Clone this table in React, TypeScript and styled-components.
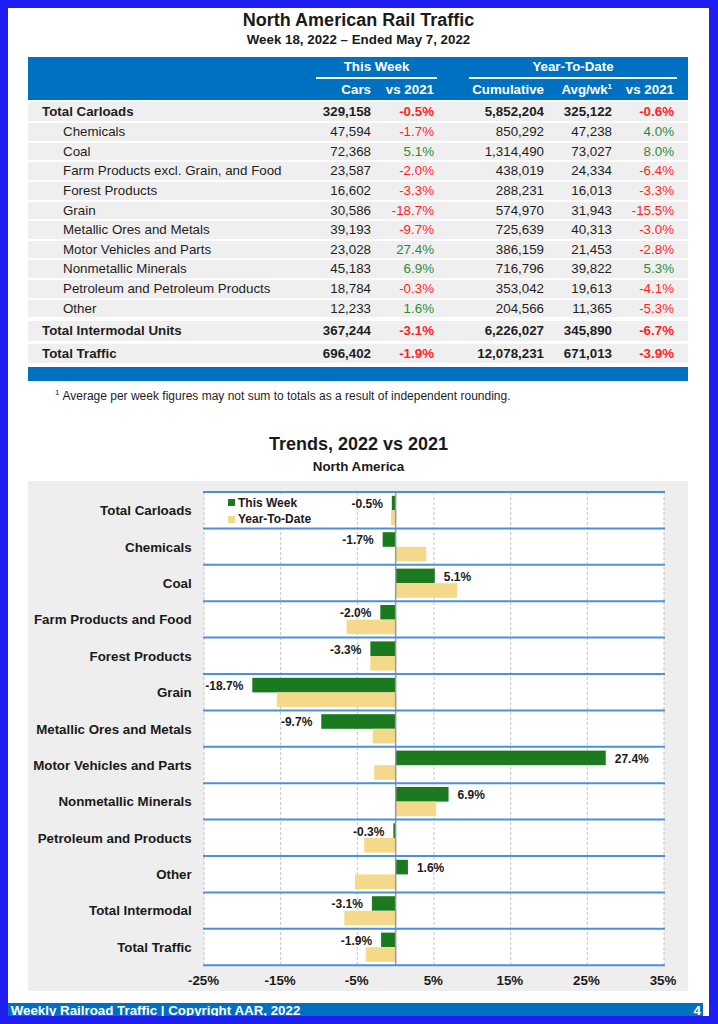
import React from "react";
import styled, { createGlobalStyle } from "styled-components";

const GlobalStyle = createGlobalStyle`
  html, body { margin: 0; padding: 0; background: #1e1ef0; }
  body { font-family: "Liberation Sans", Arial, sans-serif; color: #1a1a1a; }
  #root { padding: 8px 9px 8px 8px; }
`;

const Page = styled.div`
  width: 701px;
  height: 1008px;
  background: #fff;
  display: flex;
  flex-direction: column;
  overflow: hidden;
`;

const Title = styled.h1`
  margin: 2px 0 0;
  font-size: 18px;
  line-height: 20px;
  font-weight: 700;
  text-align: center;
`;

const Subtitle = styled.div`
  margin-top: ${(p: { $mt: number }) => p.$mt}px;
  font-size: 13.33px;
  line-height: 16px;
  font-weight: 700;
  text-align: center;
`;

const COLS = "288px 58px 63px 32px 78px 68px 62px 11px";

const Table = styled.div`
  margin: 9px 0 0 20px;
  width: 660px;
  display: flex;
  flex-direction: column;
  gap: 2px;
`;

const Header = styled.div`
  display: grid;
  grid-template-columns: ${COLS};
  background: #0070c0;
  color: #fff;
  font-size: 13.33px;
  font-weight: 700;
`;

const HeaderGroup = styled.div<{ $span: string }>`
  grid-column: ${(p) => p.$span};
  line-height: 20px;
  text-align: center;
  border-bottom: 2px solid #fff;
`;

const HeaderCell = styled.div`
  line-height: 21px;
  text-align: right;
  padding-right: 3px;
  white-space: nowrap;
  sup {
    font-size: 8px;
    line-height: 0;
    vertical-align: 5px;
  }
`;

const Row = styled.div<{ $bold?: boolean; $mt?: number }>`
  display: grid;
  grid-template-columns: ${COLS};
  background: #efefef;
  height: ${(p) => (p.$bold ? "19.3px" : "17.6px")};
  line-height: ${(p) => (p.$bold ? "19.3px" : "17.6px")};
  margin-top: ${(p) => p.$mt ?? 0}px;
  font-size: 13.33px;
  font-weight: ${(p) => (p.$bold ? 700 : 400)};
  color: #1e1e1e;
`;

const LabelCell = styled.div<{ $indent?: boolean }>`
  padding-left: ${(p) => (p.$indent ? 35 : 14)}px;
  white-space: nowrap;
`;

const NumCell = styled.div<{ $tone?: "neg" | "pos" }>`
  text-align: right;
  padding-right: 3px;
  white-space: nowrap;
  color: ${(p) => (p.$tone === "neg" ? "#ff1f1f" : p.$tone === "pos" ? "#2e8b34" : "inherit")};
`;

const BottomBar = styled.div`
  height: 13.7px;
  margin-top: 1.5px;
  background: #0070c0;
`;

const Footnote = styled.p`
  margin: 8.3px 0 0 47px;
  font-size: 12px;
  line-height: 14px;
  color: #1e1e1e;
  sup {
    font-size: 8px;
    line-height: 0;
    vertical-align: 5px;
    margin-right: 3px;
  }
`;

const ChartTitle = styled.h2`
  margin: 30.7px 0 0;
  font-size: 18px;
  line-height: 20px;
  font-weight: 700;
  text-align: center;
`;

const Panel = styled.div`
  margin: 6.4px 0 0 20px;
  width: 660px;
  height: 510px;
  box-sizing: border-box;
  padding-top: 10px;
  background: #eeeeee;
`;

const ChartBody = styled.div`
  display: flex;
`;

const LabelColumn = styled.div`
  width: 174.6px;
  padding-top: 1px;
  display: grid;
  grid-template-rows: repeat(13, 36.4px);
`;

const CatLabel = styled.div`
  display: flex;
  align-items: center;
  justify-content: flex-end;
  padding-right: 10.9px;
  font-size: 13.33px;
  font-weight: 700;
  white-space: nowrap;
  color: #1a1a1a;
`;

const PlotWrap = styled.div`
  position: relative;
  width: 462px;
  height: 476px;
`;

const Legend = styled.div`
  position: absolute;
  left: 21.4px;
  top: 3px;
  width: 90px;
  padding: 0.25px 0 0 4px;
  height: 33px;
  box-sizing: border-box;
  background: #fff;
  display: flex;
  flex-direction: column;
`;

const LegendItem = styled.div`
  height: 17.5px;
  display: flex;
  align-items: center;
  gap: 3px;
  font-size: 12px;
  font-weight: 700;
  color: #1a1a1a;
  white-space: nowrap;
`;

const Swatch = styled.span<{ $color: string }>`
  width: 7px;
  height: 7px;
  background: ${(p) => p.$color};
  flex: none;
`;

const AxisRow = styled.div`
  margin: 6px 0 0 150.6px;
  display: flex;
  gap: 26.667px;
`;

const AxisLabel = styled.div`
  width: 50px;
  text-align: center;
  font-size: 13.33px;
  line-height: 16px;
  font-weight: 700;
  color: #1a1a1a;
`;

const Footer = styled.div`
  margin-top: auto;
  width: 695px;
  height: 13px;
  box-sizing: border-box;
  padding: 1.1px 2px 0 2.7px;
  background: #0070c0;
  color: #fff;
  font-size: 13.33px;
  line-height: 13px;
  font-weight: 700;
  display: flex;
  justify-content: space-between;
  overflow: hidden;
  white-space: nowrap;
`;

type TRow = {
  label: string;
  bold?: boolean;
  mt?: number;
  v: [string, string, string, string, string];
};

const rows: TRow[] = [
  { label: "Total Carloads", bold: true, v: ["329,158", "-0.5%", "5,852,204", "325,122", "-0.6%"] },
  { label: "Chemicals", v: ["47,594", "-1.7%", "850,292", "47,238", "4.0%"] },
  { label: "Coal", v: ["72,368", "5.1%", "1,314,490", "73,027", "8.0%"] },
  { label: "Farm Products excl. Grain, and Food", v: ["23,587", "-2.0%", "438,019", "24,334", "-6.4%"] },
  { label: "Forest Products", v: ["16,602", "-3.3%", "288,231", "16,013", "-3.3%"] },
  { label: "Grain", v: ["30,586", "-18.7%", "574,970", "31,943", "-15.5%"] },
  { label: "Metallic Ores and Metals", v: ["39,193", "-9.7%", "725,639", "40,313", "-3.0%"] },
  { label: "Motor Vehicles and Parts", v: ["23,028", "27.4%", "386,159", "21,453", "-2.8%"] },
  { label: "Nonmetallic Minerals", v: ["45,183", "6.9%", "716,796", "39,822", "5.3%"] },
  { label: "Petroleum and Petroleum Products", v: ["18,784", "-0.3%", "353,042", "19,613", "-4.1%"] },
  { label: "Other", v: ["12,233", "1.6%", "204,566", "11,365", "-5.3%"] },
  { label: "Total Intermodal Units", bold: true, mt: 2, v: ["367,244", "-3.1%", "6,226,027", "345,890", "-6.7%"] },
  { label: "Total Traffic", bold: true, mt: 1.5, v: ["696,402", "-1.9%", "12,078,231", "671,013", "-3.9%"] },
];

const tone = (s: string): "neg" | "pos" => (s.startsWith("-") ? "neg" : "pos");

const chart: { label: string; week: number; ytd: number }[] = [
  { label: "Total Carloads", week: -0.5, ytd: -0.6 },
  { label: "Chemicals", week: -1.7, ytd: 4.0 },
  { label: "Coal", week: 5.1, ytd: 8.0 },
  { label: "Farm Products and Food", week: -2.0, ytd: -6.4 },
  { label: "Forest Products", week: -3.3, ytd: -3.3 },
  { label: "Grain", week: -18.7, ytd: -15.5 },
  { label: "Metallic Ores and Metals", week: -9.7, ytd: -3.0 },
  { label: "Motor Vehicles and Parts", week: 27.4, ytd: -2.8 },
  { label: "Nonmetallic Minerals", week: 6.9, ytd: 5.3 },
  { label: "Petroleum and Products", week: -0.3, ytd: -4.1 },
  { label: "Other", week: 1.6, ytd: -5.3 },
  { label: "Total Intermodal", week: -3.1, ytd: -6.7 },
  { label: "Total Traffic", week: -1.9, ytd: -3.9 },
];

const GREEN = "#1b7a1f";
const GOLD = "#f5d98a";
const BAND = 36.4;
const PX = 460 / 60;
const xOf = (v: number) => 1 + (v + 25) * PX;
const ZERO = xOf(0);

const Plot: React.FC = () => (
  <svg width="462" height="476" viewBox="0 0 462 476" style={{ display: "block" }}>
    <rect x="1" y="1" width="460" height={BAND * 13} fill="#fff" />
    {[0, 1, 2, 3, 4, 5, 6].map((k) => (
      <line
        key={k}
        x1={1 + k * 76.667}
        x2={1 + k * 76.667}
        y1="1"
        y2={1 + BAND * 13}
        stroke="#c4c4c4"
        strokeWidth="1"
        strokeDasharray="3 2"
      />
    ))}
    {chart.map((c, i) => {
      const top = 1 + i * BAND;
      const wEnd = xOf(c.week);
      const yEnd = xOf(c.ytd);
      const neg = c.week < 0;
      return (
        <g key={c.label}>
          <rect x={Math.min(ZERO, wEnd)} y={top + 3.8} width={Math.abs(wEnd - ZERO)} height={14.6} fill={GREEN} />
          <rect x={Math.min(ZERO, yEnd)} y={top + 18.4} width={Math.abs(yEnd - ZERO)} height={14.6} fill={GOLD} />
          <text
            x={neg ? wEnd - 9 : wEnd + 9}
            y={top + 12}
            textAnchor={neg ? "end" : "start"}
            dominantBaseline="central"
            fontFamily="'Liberation Sans', Arial, sans-serif"
            fontSize="12"
            fontWeight="700"
            fill="#1a1a1a"
          >
            {c.week.toFixed(1)}%
          </text>
        </g>
      );
    })}
    <line x1={ZERO} x2={ZERO} y1="1" y2={1 + BAND * 13} stroke="#9a9a9a" strokeWidth="1.5" />
    {Array.from({ length: 14 }, (_, i) => (
      <line key={i} x1="0" x2="462" y1={1 + i * BAND} y2={1 + i * BAND} stroke="#4a90dc" strokeWidth="2" />
    ))}
  </svg>
);

export default function App() {
  return (
    <>
      <GlobalStyle />
      <Page>
        <Title>North American Rail Traffic</Title>
        <Subtitle $mt={2}>Week 18, 2022 – Ended May 7, 2022</Subtitle>
        <Table>
          <Header>
            <div />
            <HeaderGroup $span="2 / 4">This Week</HeaderGroup>
            <div />
            <HeaderGroup $span="5 / 8">Year-To-Date</HeaderGroup>
            <div />
            <div />
            <HeaderCell>Cars</HeaderCell>
            <HeaderCell>vs 2021</HeaderCell>
            <div />
            <HeaderCell>Cumulative</HeaderCell>
            <HeaderCell>
              Avg/wk<sup>1</sup>
            </HeaderCell>
            <HeaderCell>vs 2021</HeaderCell>
            <div />
          </Header>
          {rows.map((r) => (
            <Row key={r.label} $bold={r.bold} $mt={r.mt}>
              <LabelCell $indent={!r.bold}>{r.label}</LabelCell>
              <NumCell>{r.v[0]}</NumCell>
              <NumCell $tone={tone(r.v[1])}>{r.v[1]}</NumCell>
              <div />
              <NumCell>{r.v[2]}</NumCell>
              <NumCell>{r.v[3]}</NumCell>
              <NumCell $tone={tone(r.v[4])}>{r.v[4]}</NumCell>
              <div />
            </Row>
          ))}
          <BottomBar />
        </Table>
        <Footnote>
          <sup>1</sup>Average per week figures may not sum to totals as a result of independent rounding.
        </Footnote>
        <ChartTitle>Trends, 2022 vs 2021</ChartTitle>
        <Subtitle $mt={5.6}>North America</Subtitle>
        <Panel>
          <ChartBody>
            <LabelColumn>
              {chart.map((c) => (
                <CatLabel key={c.label}>{c.label}</CatLabel>
              ))}
            </LabelColumn>
            <PlotWrap>
              <Plot />
              <Legend>
                <LegendItem>
                  <Swatch $color={GREEN} />
                  This Week
                </LegendItem>
                <LegendItem>
                  <Swatch $color={GOLD} />
                  Year-To-Date
                </LegendItem>
              </Legend>
            </PlotWrap>
          </ChartBody>
          <AxisRow>
            {["-25%", "-15%", "-5%", "5%", "15%", "25%", "35%"].map((a) => (
              <AxisLabel key={a}>{a}</AxisLabel>
            ))}
          </AxisRow>
        </Panel>
        <Footer>
          <span>Weekly Railroad Traffic | Copyright AAR, 2022</span>
          <span>4</span>
        </Footer>
      </Page>
    </>
  );
}
